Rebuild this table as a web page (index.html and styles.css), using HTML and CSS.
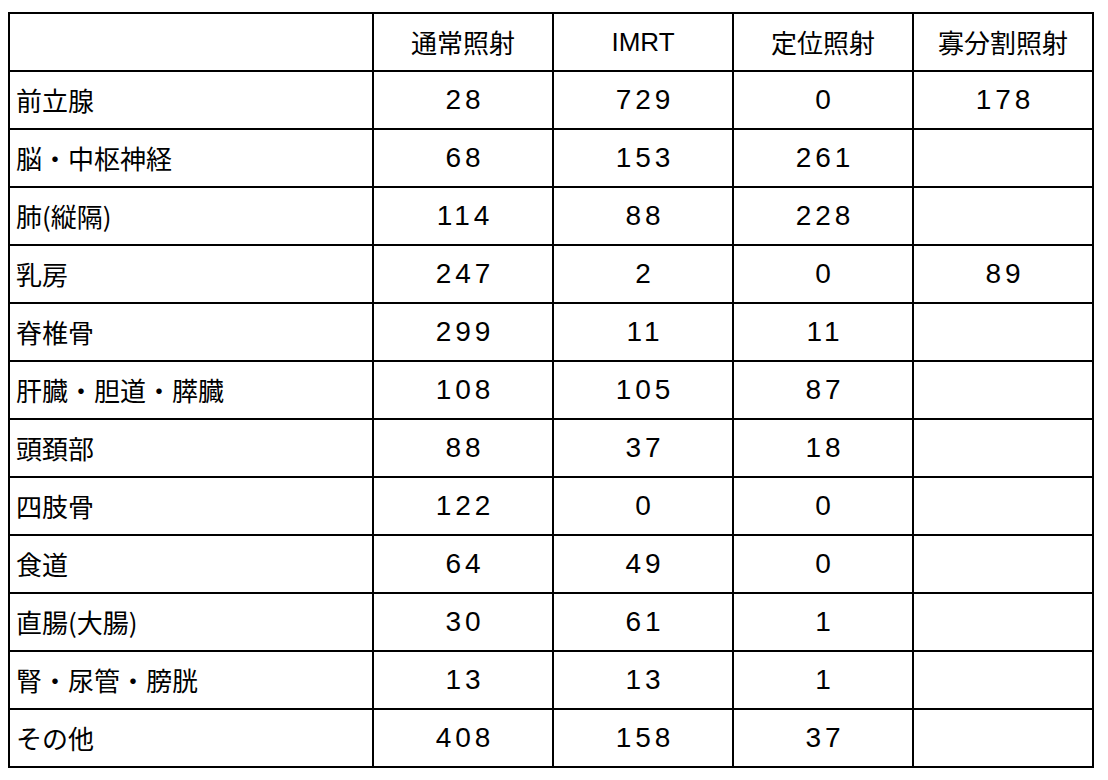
FILE: index.html
```html
<!DOCTYPE html>
<html lang="ja">
<head>
<meta charset="utf-8">
<title>照射件数</title>
<link rel="stylesheet" href="styles.css">
</head>
<body>
<table class="stats">
  <colgroup>
    <col class="c-site">
    <col class="c-num">
    <col class="c-num">
    <col class="c-num">
    <col class="c-num">
  </colgroup>
  <thead>
    <tr>
      <th class="site"></th>
      <th>通常照射</th>
      <th class="latin">IMRT</th>
      <th>定位照射</th>
      <th>寡分割照射</th>
    </tr>
  </thead>
  <tbody>
    <tr><td class="site">前立腺</td><td class="num">28</td><td class="num">729</td><td class="num">0</td><td class="num">178</td></tr>
    <tr><td class="site">脳・中枢神経</td><td class="num">68</td><td class="num">153</td><td class="num">261</td><td class="num"></td></tr>
    <tr><td class="site">肺(縦隔)</td><td class="num">114</td><td class="num">88</td><td class="num">228</td><td class="num"></td></tr>
    <tr><td class="site">乳房</td><td class="num">247</td><td class="num">2</td><td class="num">0</td><td class="num">89</td></tr>
    <tr><td class="site">脊椎骨</td><td class="num">299</td><td class="num">11</td><td class="num">11</td><td class="num"></td></tr>
    <tr><td class="site">肝臓・胆道・膵臓</td><td class="num">108</td><td class="num">105</td><td class="num">87</td><td class="num"></td></tr>
    <tr><td class="site">頭頚部</td><td class="num">88</td><td class="num">37</td><td class="num">18</td><td class="num"></td></tr>
    <tr><td class="site">四肢骨</td><td class="num">122</td><td class="num">0</td><td class="num">0</td><td class="num"></td></tr>
    <tr><td class="site">食道</td><td class="num">64</td><td class="num">49</td><td class="num">0</td><td class="num"></td></tr>
    <tr><td class="site">直腸(大腸)</td><td class="num">30</td><td class="num">61</td><td class="num">1</td><td class="num"></td></tr>
    <tr><td class="site">腎・尿管・膀胱</td><td class="num">13</td><td class="num">13</td><td class="num">1</td><td class="num"></td></tr>
    <tr><td class="site">その他</td><td class="num">408</td><td class="num">158</td><td class="num">37</td><td class="num"></td></tr>
  </tbody>
</table>
</body>
</html>
```

FILE: styles.css
```css
html, body {
  background: #ffffff;
}

body {
  margin: 8px;
  padding-top: 4px;
  color: #000000;
  font-family: "Liberation Sans", "Noto Sans CJK JP", sans-serif;
}

.stats {
  border-collapse: collapse;
  table-layout: fixed;
  width: 1086px;
  font-size: 26px;
}

.c-site {
  width: 364px;
}

.c-num {
  width: 180px;
}

.stats tr {
  height: 58px;
}

.stats th,
.stats td {
  border: 2px solid #000000;
  padding: 0;
  text-align: center;
  vertical-align: middle;
  font-weight: normal;
  line-height: 30px;
  white-space: nowrap;
}

.stats th {
  font-family: "Noto Sans CJK JP", sans-serif;
}

.stats th.latin {
  font-family: "Liberation Sans", sans-serif;
}

.stats td.site {
  text-align: left;
  padding-left: 6px;
  font-family: "Noto Sans CJK JP", sans-serif;
}

.stats td.num {
  font-family: "Liberation Sans", sans-serif;
  font-size: 28px;
  letter-spacing: 4px;
  padding-left: 4px;
}
```
